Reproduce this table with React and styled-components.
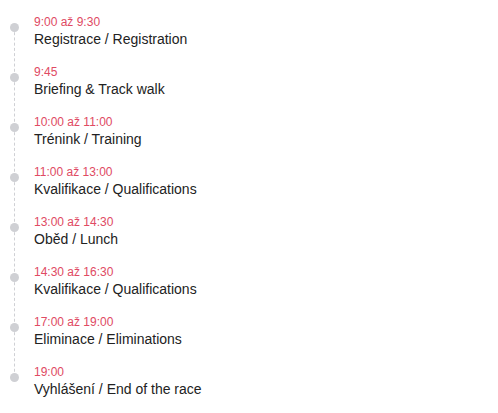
import React from 'react';
import styled, { createGlobalStyle } from 'styled-components';

const GlobalStyle = createGlobalStyle`
  body {
    margin: 0;
    background: #fff;
    font-family: "Liberation Sans", Arial, sans-serif;
  }
`;

const Timeline = styled.ul`
  list-style: none;
  margin: 0;
  padding: 14px 0 0 34px;
  position: relative;
`;

const Item = styled.li`
  position: relative;
  height: 50px;

  &::before {
    content: '';
    position: absolute;
    left: -24px;
    top: 9px;
    width: 9px;
    height: 9px;
    border-radius: 50%;
    background: #cfd0d4;
    z-index: 1;
  }

  &:not(:last-child)::after {
    content: '';
    position: absolute;
    left: -20px;
    top: 13px;
    height: 50px;
    border-left: 1px dashed #cfd0d4;
  }
`;

const Time = styled.div`
  font-size: 12px;
  line-height: 16px;
  color: #e04a63;
`;

const Title = styled.div`
  font-size: 14px;
  line-height: 18px;
  color: #222;
`;

const schedule = [
  ['9:00 až 9:30', 'Registrace / Registration'],
  ['9:45', 'Briefing & Track walk'],
  ['10:00 až 11:00', 'Trénink / Training'],
  ['11:00 až 13:00', 'Kvalifikace / Qualifications'],
  ['13:00 až 14:30', 'Oběd / Lunch'],
  ['14:30 až 16:30', 'Kvalifikace / Qualifications'],
  ['17:00 až 19:00', 'Eliminace / Eliminations'],
  ['19:00', 'Vyhlášení / End of the race'],
];

const App = () => (
  <>
    <GlobalStyle />
    <Timeline>
      {schedule.map(([time, title]) => (
        <Item key={time}>
          <Time>{time}</Time>
          <Title>{title}</Title>
        </Item>
      ))}
    </Timeline>
  </>
);

export default App;
